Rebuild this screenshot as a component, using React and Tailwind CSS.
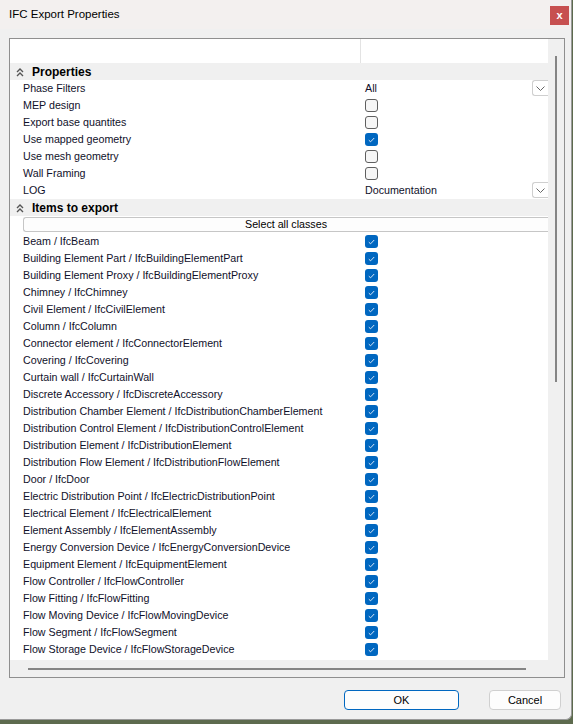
import React from 'react'

const props = [
  { label: 'Phase Filters', type: 'select', value: 'All' },
  { label: 'MEP design', type: 'check', value: false },
  { label: 'Export base quantites', type: 'check', value: false },
  { label: 'Use mapped geometry', type: 'check', value: true },
  { label: 'Use mesh geometry', type: 'check', value: false },
  { label: 'Wall Framing', type: 'check', value: false },
  { label: 'LOG', type: 'select', value: 'Documentation' },
]

const items = [
  'Beam / IfcBeam',
  'Building Element Part / IfcBuildingElementPart',
  'Building Element Proxy / IfcBuildingElementProxy',
  'Chimney / IfcChimney',
  'Civil Element / IfcCivilElement',
  'Column / IfcColumn',
  'Connector element / IfcConnectorElement',
  'Covering / IfcCovering',
  'Curtain wall / IfcCurtainWall',
  'Discrete Accessory / IfcDiscreteAccessory',
  'Distribution Chamber Element / IfcDistributionChamberElement',
  'Distribution Control Element / IfcDistributionControlElement',
  'Distribution Element / IfcDistributionElement',
  'Distribution Flow Element / IfcDistributionFlowElement',
  'Door / IfcDoor',
  'Electric Distribution Point / IfcElectricDistributionPoint',
  'Electrical Element / IfcElectricalElement',
  'Element Assembly / IfcElementAssembly',
  'Energy Conversion Device / IfcEnergyConversionDevice',
  'Equipment Element / IfcEquipmentElement',
  'Flow Controller / IfcFlowController',
  'Flow Fitting / IfcFlowFitting',
  'Flow Moving Device / IfcFlowMovingDevice',
  'Flow Segment / IfcFlowSegment',
  'Flow Storage Device / IfcFlowStorageDevice',
]

const Check = ({ checked }) =>
  checked ? (
    <div className="w-[13px] h-[13px] rounded-[3px] bg-[#0067c0] flex items-center justify-center">
      <svg width="7" height="6" viewBox="0 0 7 6">
        <path d="M0.8 3.2 L2.6 4.8 L6.2 1" fill="none" stroke="#d8e6f5" strokeWidth="1" />
      </svg>
    </div>
  ) : (
    <div className="w-[13px] h-[13px] rounded-[3px] border border-[#5f5f5f] bg-[#f6f6f6]" />
  )

const Collapse = () => (
  <svg width="8" height="9" viewBox="0 0 8 9" className="mr-[8px]">
    <path d="M1 4 L4 1 L7 4 M1 8 L4 5 L7 8" fill="none" stroke="#555" strokeWidth="1.4" />
  </svg>
)

const Dropdown = () => (
  <div className="w-[16px] h-[16px] border border-r-0 border-[#cfcfcf] rounded-l-[3px] bg-white flex items-center justify-center">
    <svg width="9" height="5" viewBox="0 0 9 5">
      <path d="M0.5 0.5 L4.5 4.5 L8.5 0.5" fill="none" stroke="#666" strokeWidth="1" />
    </svg>
  </div>
)

const GroupHeader = ({ title }) => (
  <div className="h-[17px] bg-[#f0f0f0] flex items-center pl-[6px] pt-[1px]">
    <Collapse />
    <span className="font-bold text-[12px] text-black">{title}</span>
  </div>
)

const Row = ({ label, children }) => (
  <div className="h-[17px] flex items-center">
    <div className="w-[351px] pl-[13px] text-[10.7px] text-[#10102a] whitespace-nowrap overflow-hidden">{label}</div>
    <div className="flex-1 flex items-center pl-[4px]">{children}</div>
  </div>
)

export default function App() {
  return (
    <div
      className="w-[573px] h-[724px] bg-[#5d6b4e] overflow-hidden"
      style={{ fontFamily: '"Liberation Sans", Arial, sans-serif' }}
    >
      <div className="w-[572px] h-[720px] bg-[#f0f0f0] border-r border-b border-[#9a9a9a] rounded-br-[6px] flex flex-col">
        {/* title bar */}
        <div className="h-[29px] bg-[#f3f0ef] flex items-center justify-between pl-[9px] pr-[2px]">
          <span className="text-[11.5px] text-black">IFC Export Properties</span>
          <div className="w-[19px] h-[19px] mt-[2px] bg-[#c75050] flex items-center justify-center">
            <span className="text-white text-[11px] font-bold leading-none">x</span>
          </div>
        </div>

        {/* property panel */}
        <div className="ml-[9px] mt-[9px] w-[556px] h-[640px] border border-[#8f8f8f] flex">
          <div className="flex-1 flex flex-col">
            <div className="flex-1 bg-white">
              <div className="h-[24px] flex">
                <div className="w-[351px] border-r border-[#e3e3e3]" />
              </div>
              <GroupHeader title="Properties" />
              {props.map((p) => (
                <Row key={p.label} label={p.label}>
                  {p.type === 'check' ? (
                    <Check checked={p.value} />
                  ) : (
                    <div className="flex-1 flex items-center justify-between">
                      <span className="text-[10.7px] text-[#10102a]">{p.value}</span>
                      <Dropdown />
                    </div>
                  )}
                </Row>
              ))}
              <GroupHeader title="Items to export" />
              <div className="h-[17px] pl-[13px] flex items-center">
                <div className="flex-1 h-[15px] border border-[#c6c6c6] border-r-0 rounded-l-[3px] bg-[#fdfdfd] flex items-center justify-center text-[10.7px] text-black">
                  Select all classes
                </div>
              </div>
              {items.map((it) => (
                <Row key={it} label={it}>
                  <Check checked />
                </Row>
              ))}
            </div>
            {/* horizontal scrollbar */}
            <div className="h-[17px] bg-[#f0f0f0] flex items-center pl-[18px]">
              <div className="w-[498px] h-[2px] bg-[#858585]" />
            </div>
          </div>
          {/* vertical scrollbar */}
          <div className="w-[16px] bg-[#f0f0f0] pt-[17px] flex justify-center">
            <div className="w-[2px] h-[326px] bg-[#858585]" />
          </div>
        </div>

        {/* footer buttons */}
        <div className="flex justify-end items-center mt-[12px] pr-[10px]">
          <div className="w-[115px] h-[20px] border border-[#0067c0] rounded-[4px] bg-[#fdfdfd] flex items-center justify-center text-[11px] text-black">
            OK
          </div>
          <div className="w-[72px] h-[20px] ml-[30px] border border-[#d0d0d0] rounded-[4px] bg-[#fdfdfd] flex items-center justify-center text-[11px] text-black">
            Cancel
          </div>
        </div>
      </div>
    </div>
  )
}
